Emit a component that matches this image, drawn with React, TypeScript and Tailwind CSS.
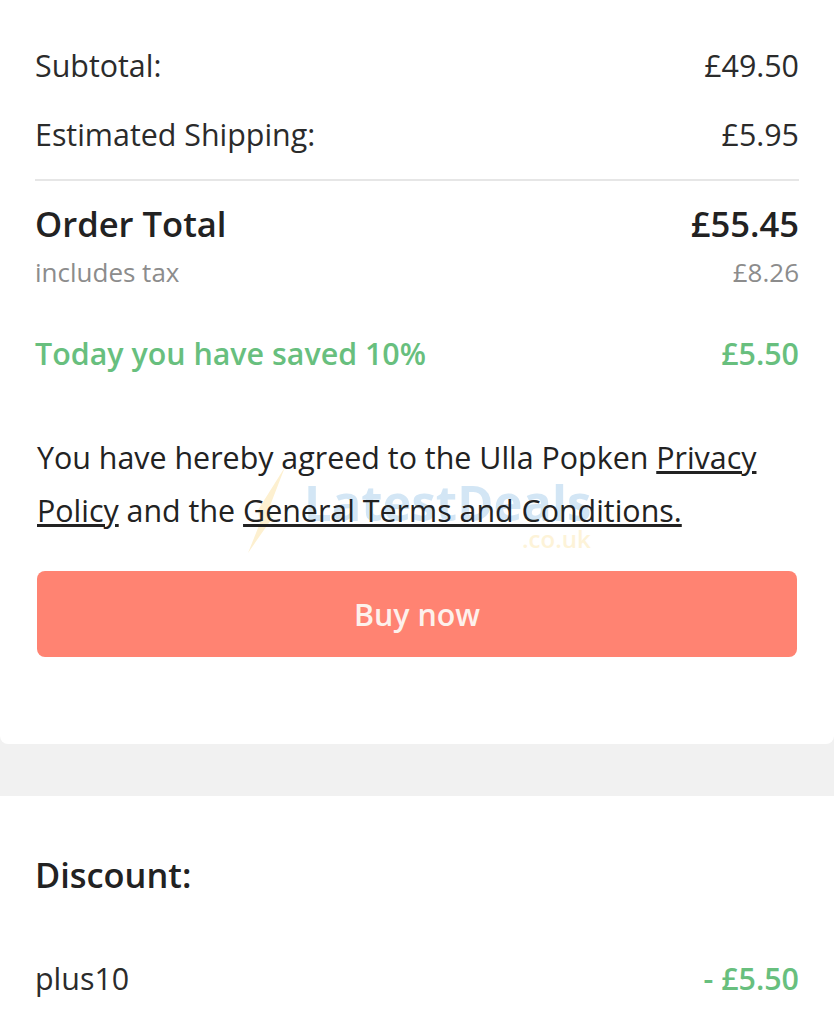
export default function App() {
  return (
    <div className="h-[1024px] w-[834px] overflow-hidden bg-[#f1f1f1] font-['Open_Sans',sans-serif]">
      <section className="relative h-[744px] rounded-b-lg bg-white px-[35px] pt-[44px]">
        <div className="flex h-[44px] items-center justify-between text-[30.4px] text-[#2b2b2b]"><span>Subtotal:</span><span>£49.50</span></div>
        <div className="mt-[25px] flex h-[44px] items-center justify-between text-[30.4px] text-[#2b2b2b]"><span>Estimated Shipping:</span><span>£5.95</span></div>
        <div className="mt-[22px] border-t-2 border-[#e6e6e6]" />
        <div className="mt-[20px] flex h-[46px] items-center justify-between text-[34.6px] font-semibold text-[#222]"><span>Order Total</span><span>£55.45</span></div>
        <div className="mt-[7px] flex h-[36px] items-center justify-between text-[26px] text-[#8c8c8c]"><span>includes tax</span><span>£8.26</span></div>
        <div className="mt-[44px] flex h-[40px] items-center justify-between text-[30.4px] font-semibold text-[#68bf7e]"><span>Today you have saved 10%</span><span>£5.50</span></div>
        <div className="absolute left-[248px] top-[465px] h-[88px] w-[37px]">
          <svg viewBox="0 0 37 88" className="h-full w-full"><path d="M37 2 L10 45 L12 58 L0 88 L25 52 L20 46 Z" fill="#fdf0d0" /></svg>
        </div>
        <span className="absolute left-[304px] top-[474px] text-[49px] font-bold leading-[56px] text-[#d3e6f5]">LatestDeals</span>
        <span className="absolute left-[522px] top-[524px] text-[24px] font-semibold leading-[30px] text-[#fdf3d8]">.co.uk</span>
        <p className="relative ml-[2px] mt-[57px] text-[30.4px] leading-[53px] text-[#222]">You have hereby agreed to the Ulla Popken <span className="underline">Privacy Policy</span> and the <span className="underline">General Terms and Conditions.</span></p>
        <button className="ml-[2px] mt-[34px] flex h-[86px] w-[760px] items-center justify-center rounded-lg bg-[#ff8372] pt-[2px] text-[30.4px] font-semibold text-[#fdf1ec]">Buy now</button>
      </section>
      <section className="mt-[52px] h-[228px] bg-white px-[35px] pt-[56px]">
        <h2 className="text-[34.4px] font-semibold leading-[46px] text-[#222]">Discount:</h2>
        <div className="mt-[59px] flex h-[44px] items-center justify-between text-[30.4px]"><span className="text-[#2b2b2b]">plus10</span><span className="font-semibold text-[#68bf7e]">- £5.50</span></div>
      </section>
    </div>
  );
}
